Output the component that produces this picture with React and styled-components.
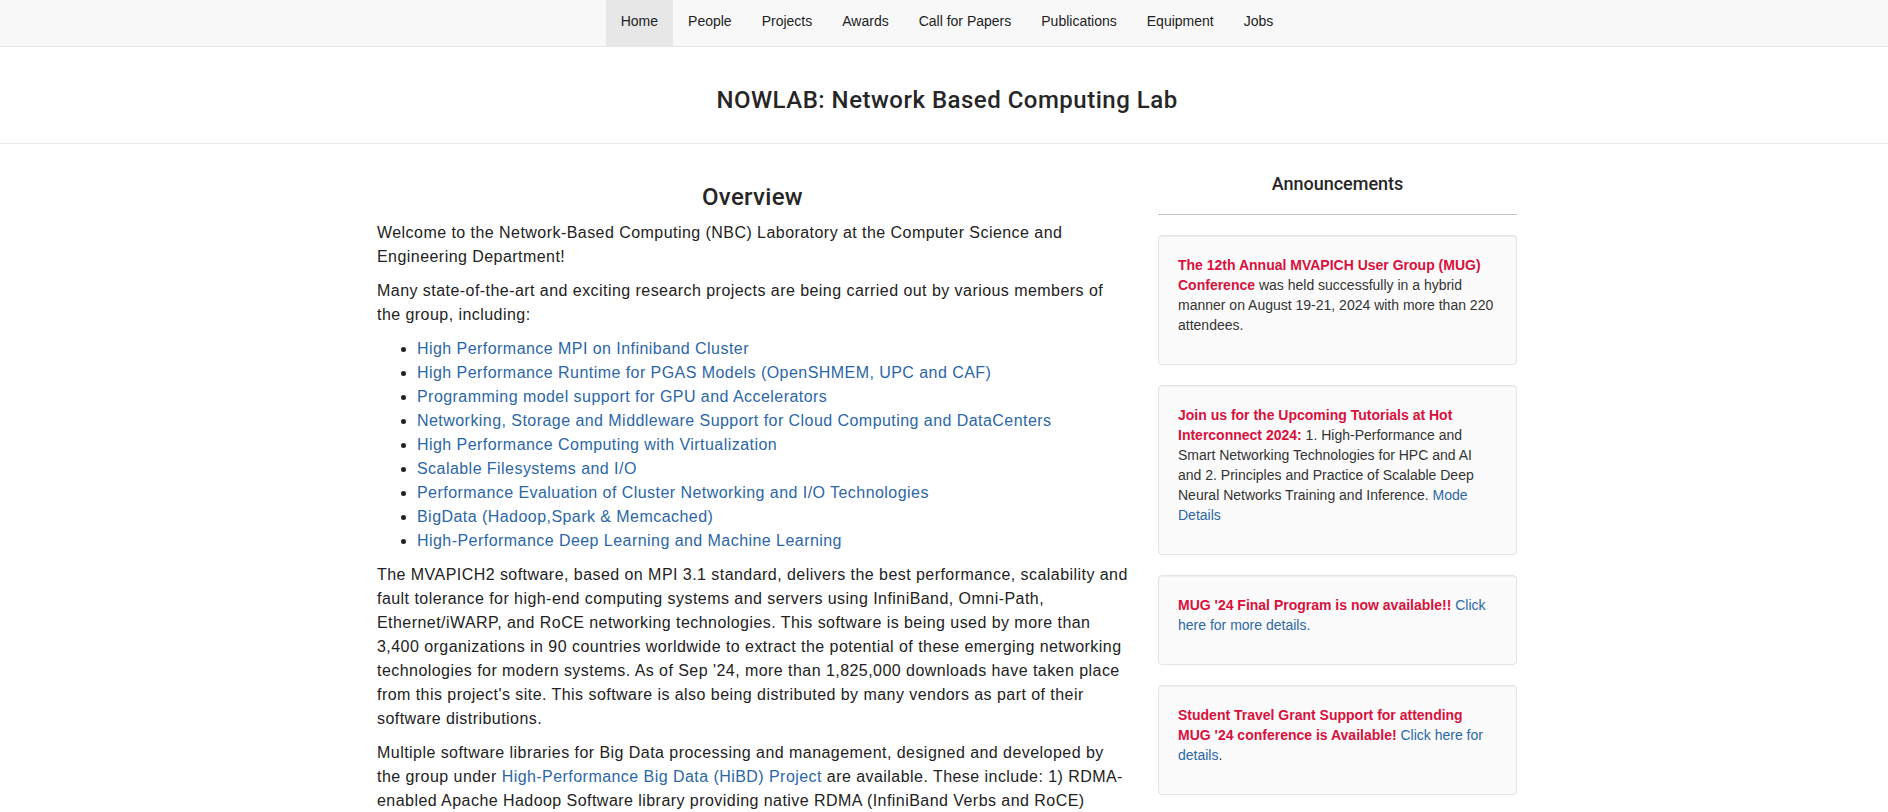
import styled, { createGlobalStyle } from 'styled-components';

const GlobalStyle = createGlobalStyle`
  body {
    margin: 0;
    font-family: "Liberation Sans", Helvetica, Arial, sans-serif;
    font-size: 14px;
    line-height: 20px;
    color: #333;
    background: #fff;
  }
  a {
    color: #2b67a6;
    text-decoration: none;
  }
`;

const link = '#2b67a6';
const red = '#d9103b';

const Navbar = styled.nav`
  background: #f8f8f8;
  border-bottom: 1px solid #e7e7e7;
`;

const NavList = styled.ul`
  list-style: none;
  margin: 0 auto;
  padding: 0 0 0 6px;
  display: flex;
  justify-content: center;
`;

const NavItem = styled.li`
  > a {
    display: block;
    padding: 11px 15px 15px;
    line-height: 20px;
    font-size: 14px;
    color: #222;
    background: ${p => (p.$active ? '#e7e7e7' : 'transparent')};
  }
`;

const Header = styled.header`
  border-bottom: 1px solid #e7e7e7;
  padding: 40px 0 30px 6px;
  text-align: center;
`;

const SiteTitle = styled.h1`
  margin: 0;
  font-family: Roboto, "Liberation Sans", sans-serif;
  font-weight: 500;
  font-size: 24px;
  line-height: 26px;
  letter-spacing: 0.5px;
  color: #262626;
`;

const Container = styled.div`
  box-sizing: border-box;
  width: 1146px;
  margin: 0 auto;
  padding-left: 6px;
  display: grid;
  grid-template-columns: 751px 359px;
  column-gap: 30px;
`;

const Main = styled.main`
  font-size: 16px;
  line-height: 24px;
  letter-spacing: 0.45px;
  color: #222;

  p {
    margin: 0 0 10px;
  }
`;

const SectionTitle = styled.h2`
  margin: 40px 0 11px;
  text-align: center;
  font-family: Roboto, "Liberation Sans", sans-serif;
  font-weight: 500;
  font-size: 24px;
  line-height: 26px;
  letter-spacing: 0.3px;
  color: #262626;
`;

const Topics = styled.ul`
  margin: 0 0 10px;
  padding-left: 40px;

  li a {
    color: ${link};
  }
`;

const Sidebar = styled.aside``;

const SideTitle = styled.h3`
  margin: 30px 0 0;
  text-align: center;
  font-family: Roboto, "Liberation Sans", sans-serif;
  font-weight: 500;
  font-size: 18px;
  line-height: 20px;
  color: #262626;
`;

const Rule = styled.hr`
  margin: 20px 0;
  border: 0;
  border-top: 1px solid #c4c4c4;
`;

const Well = styled.div`
  background: #fbfbfb;
  border: 1px solid #e3e3e3;
  border-radius: 4px;
  box-shadow: inset 0 1px 1px rgba(0, 0, 0, 0.05);
  padding: 19px;
  margin-bottom: 20px;

  p {
    margin: 0 0 10px;
    font-size: 14px;
    line-height: 20px;
  }
`;

const Hot = styled.strong`
  color: ${red};
  font-weight: bold;
`;

const topics = [
  'High Performance MPI on Infiniband Cluster',
  'High Performance Runtime for PGAS Models (OpenSHMEM, UPC and CAF)',
  'Programming model support for GPU and Accelerators',
  'Networking, Storage and Middleware Support for Cloud Computing and DataCenters',
  'High Performance Computing with Virtualization',
  'Scalable Filesystems and I/O',
  'Performance Evaluation of Cluster Networking and I/O Technologies',
  'BigData (Hadoop,Spark & Memcached)',
  'High-Performance Deep Learning and Machine Learning',
];

const navLinks = ['Home', 'People', 'Projects', 'Awards', 'Call for Papers', 'Publications', 'Equipment', 'Jobs'];

const App = () => (
  <>
    <GlobalStyle />
    <Navbar>
      <NavList>
        {navLinks.map((name, i) => (
          <NavItem key={name} $active={i === 0}>
            <a href="#">{name}</a>
          </NavItem>
        ))}
      </NavList>
    </Navbar>
    <Header>
      <SiteTitle>NOWLAB: Network Based Computing Lab</SiteTitle>
    </Header>
    <Container>
      <Main>
        <SectionTitle>Overview</SectionTitle>
        <p>
          Welcome to the Network-Based Computing (NBC) Laboratory at the Computer Science and
          Engineering Department!
        </p>
        <p>
          Many state-of-the-art and exciting research projects are being carried out by various
          members of the group, including:
        </p>
        <Topics>
          {topics.map(t => (
            <li key={t}>
              <a href="#">{t}</a>
            </li>
          ))}
        </Topics>
        <p>
          The MVAPICH2 software, based on MPI 3.1 standard, delivers the best performance,
          scalability and fault tolerance for high-end computing systems and servers using
          InfiniBand, Omni-Path, Ethernet/iWARP, and RoCE networking technologies. This software is
          being used by more than 3,400 organizations in 90 countries worldwide to extract the
          potential of these emerging networking technologies for modern systems. As of Sep '24,
          more than 1,825,000 downloads have taken place from this project's site. This software is
          also being distributed by many vendors as part of their software distributions.
        </p>
        <p>
          Multiple software libraries for Big Data processing and management, designed and
          developed by the group under <a href="#">High-Performance Big Data (HiBD) Project</a> are
          available. These include: 1) RDMA-enabled Apache Hadoop Software library providing native
          RDMA (InfiniBand Verbs and RoCE) support.
        </p>
      </Main>
      <Sidebar>
        <SideTitle>Announcements</SideTitle>
        <Rule />
        <Well>
          <p>
            <Hot>The 12th Annual MVAPICH User Group (MUG) Conference</Hot> was held successfully in
            a hybrid manner on August 19-21, 2024 with more than 220 attendees.
          </p>
        </Well>
        <Well>
          <p>
            <Hot>Join us for the Upcoming Tutorials at Hot Interconnect 2024:</Hot> 1.
            High-Performance and Smart Networking Technologies for HPC and AI and 2. Principles and
            Practice of Scalable Deep Neural Networks Training and Inference.{' '}
            <a href="#">Mode Details</a>
          </p>
        </Well>
        <Well>
          <p>
            <Hot>MUG '24 Final Program is now available!!</Hot>{' '}
            <a href="#">Click here for more details.</a>
          </p>
        </Well>
        <Well>
          <p>
            <Hot>Student Travel Grant Support for attending MUG '24 conference is Available!</Hot>{' '}
            <a href="#">Click here for details</a>.
          </p>
        </Well>
      </Sidebar>
    </Container>
  </>
);

export default App;
